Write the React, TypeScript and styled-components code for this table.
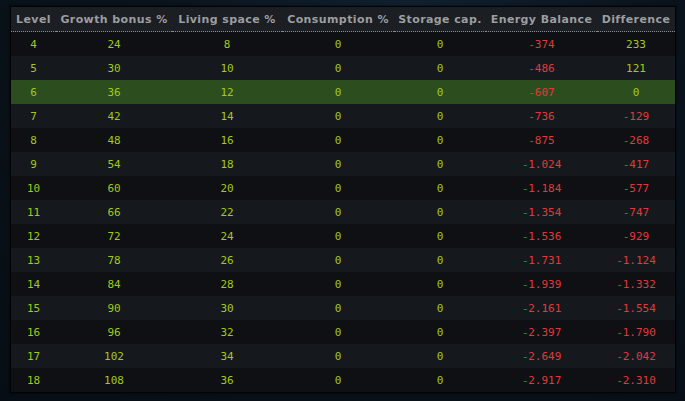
import React from "react";
import styled, { createGlobalStyle } from "styled-components";

const GlobalStyle = createGlobalStyle`
  html, body {
    margin: 0;
    padding: 0;
    background: #09111a;
  }
  body {
    width: 685px;
    height: 401px;
    overflow: hidden;
    background: radial-gradient(ellipse at 60% 0%, #10202e 0%, #0a131c 45%, #070d14 100%);
  }
`;

const Page = styled.div`
  padding: 6px 0 0 10px;
`;

const Frame = styled.div`
  width: 664px;
  border: 1px solid #020304;
  box-shadow: 0 0 2px rgba(0, 0, 0, 0.8);
`;

const Table = styled.table`
  width: 664px;
  border-collapse: collapse;
  table-layout: fixed;
`;

const Th = styled.th<{ w: number }>`
  width: ${(p) => p.w}px;
  height: 24px;
  padding: 0;
  background: #1b1e23;
  color: #9b9d9f;
  font-family: "DejaVu Sans", Verdana, sans-serif;
  font-weight: bold;
  font-size: 11px;
  letter-spacing: 0.4px;
  text-align: center;
  white-space: nowrap;
  border-bottom: 1px dotted #8a8d90;
`;

const Tr = styled.tr<{ alt: boolean; active: boolean }>`
  background: ${(p) => (p.active ? "#2c4e1f" : p.alt ? "#15191d" : "#0e1014")};
`;

const Td = styled.td<{ neg?: boolean }>`
  height: 24px;
  padding: 0;
  text-align: center;
  font-family: "DejaVu Sans Mono", "Liberation Mono", monospace;
  font-size: 11px;
  color: ${(p) => (p.neg ? "#e0393a" : "#a2c81a")};
`;

const columns: [string, number][] = [
  ["Level", 45],
  ["Growth bonus %", 116],
  ["Living space %", 110],
  ["Consumption %", 112],
  ["Storage cap.", 92],
  ["Energy Balance", 111],
  ["Difference", 78],
];

const rows: [number, number, number, string, string][] = [
  [4, 24, 8, "-374", "233"],
  [5, 30, 10, "-486", "121"],
  [6, 36, 12, "-607", "0"],
  [7, 42, 14, "-736", "-129"],
  [8, 48, 16, "-875", "-268"],
  [9, 54, 18, "-1.024", "-417"],
  [10, 60, 20, "-1.184", "-577"],
  [11, 66, 22, "-1.354", "-747"],
  [12, 72, 24, "-1.536", "-929"],
  [13, 78, 26, "-1.731", "-1.124"],
  [14, 84, 28, "-1.939", "-1.332"],
  [15, 90, 30, "-2.161", "-1.554"],
  [16, 96, 32, "-2.397", "-1.790"],
  [17, 102, 34, "-2.649", "-2.042"],
  [18, 108, 36, "-2.917", "-2.310"],
];

export default function App() {
  return (
    <>
      <GlobalStyle />
      <Page>
        <Frame>
          <Table>
            <thead>
              <tr>
                {columns.map(([label, w]) => (
                  <Th key={label} w={w}>
                    {label}
                  </Th>
                ))}
              </tr>
            </thead>
            <tbody>
              {rows.map(([lvl, growth, space, energy, diff], i) => (
                <Tr key={lvl} alt={i % 2 === 1} active={lvl === 6}>
                  <Td>{lvl}</Td>
                  <Td>{growth}</Td>
                  <Td>{space}</Td>
                  <Td>0</Td>
                  <Td>0</Td>
                  <Td neg>{energy}</Td>
                  <Td neg={diff.startsWith("-")}>{diff}</Td>
                </Tr>
              ))}
            </tbody>
          </Table>
        </Frame>
      </Page>
    </>
  );
}
